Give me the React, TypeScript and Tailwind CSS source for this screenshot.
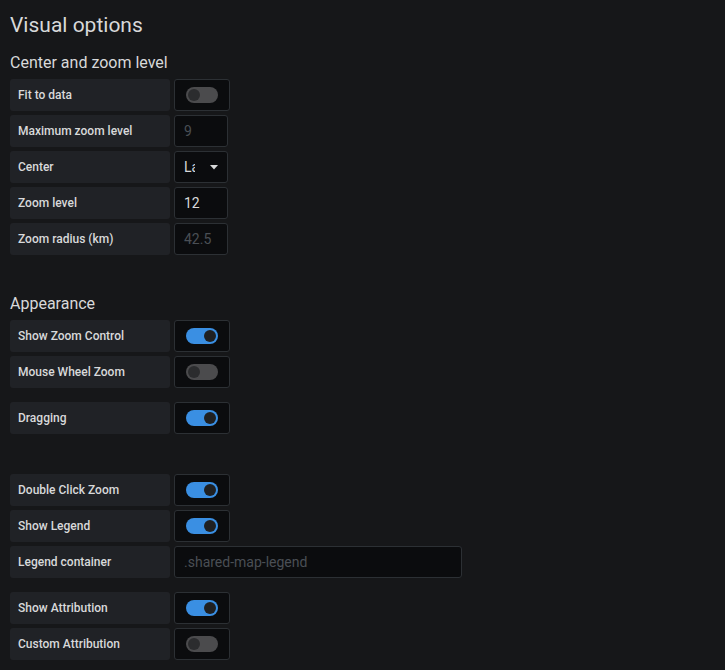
import React from 'react';

const Label: React.FC<{ text: string }> = ({ text }) => (
  <div className="w-[160px] h-8 bg-[#202226] rounded-[3px] flex items-center px-2 text-[12px] font-medium text-[#d8d9da] shrink-0">
    {text}
  </div>
);

const Toggle: React.FC<{ on?: boolean }> = ({ on = false }) => (
  <div className="w-[56px] h-8 bg-[#0b0c0e] border border-[#2c3034] rounded-[3px] flex items-center justify-center">
    <div
      className={
        on
          ? 'w-8 h-4 rounded-full bg-[#3a8fe3] flex items-center justify-end px-[2px]'
          : 'w-8 h-4 rounded-full bg-[#4b4b4d] flex items-center justify-start px-[2px]'
      }
    >
      <div className={on ? 'w-3 h-3 rounded-full bg-[#1f2022]' : 'w-3 h-3 rounded-full bg-[#2b2c2e]'} />
    </div>
  </div>
);

const Row: React.FC<{ label: string; children: React.ReactNode; className?: string }> = ({ label, children, className }) => (
  <div className={`flex gap-1 ${className ?? ''}`}>
    <Label text={label} />
    {children}
  </div>
);

const TextBox: React.FC<{ value: string; placeholder?: boolean; width?: string }> = ({ value, placeholder, width = 'w-[54px]' }) => (
  <div
    className={`${width} h-8 bg-[#0b0c0e] border border-[#2c3034] rounded-[3px] flex items-center px-[9px] text-[14px] ${
      placeholder ? 'text-[#4a4f55]' : 'text-[#d8d9da]'
    }`}
  >
    {value}
  </div>
);

export default function App() {
  return (
    <div className="min-h-[670px] bg-[#161719] px-[10px] pt-[11px] pb-[10px] font-['Roboto','Liberation_Sans',sans-serif]">
      <h1 className="text-[21px] leading-[28px] text-[#d8d9da]">Visual options</h1>

      <h2 className="mt-[14px] text-[16px] leading-[20px] text-[#d8d9da]">Center and zoom level</h2>
      <div className="mt-[6px] flex flex-col gap-1">
        <Row label="Fit to data">
          <Toggle />
        </Row>
        <Row label="Maximum zoom level">
          <TextBox value="9" placeholder />
        </Row>
        <Row label="Center">
          <div className="w-[54px] h-8 bg-[#0b0c0e] border border-[#2c3034] rounded-[3px] flex items-center pl-[9px] pr-[9px] text-[14px] text-[#d8d9da]">
            <span className="w-[11px] overflow-hidden whitespace-nowrap">La</span>
            <svg className="ml-auto" width="8" height="5" viewBox="0 0 8 5">
              <path d="M0 0 L8 0 L4 4.5 Z" fill="#d8d9da" />
            </svg>
          </div>
        </Row>
        <Row label="Zoom level">
          <TextBox value="12" />
        </Row>
        <Row label="Zoom radius (km)">
          <TextBox value="42.5" placeholder />
        </Row>
      </div>

      <h2 className="mt-[39px] text-[16px] leading-[20px] text-[#d8d9da]">Appearance</h2>
      <div className="mt-[6px] flex flex-col gap-1">
        <Row label="Show Zoom Control">
          <Toggle on />
        </Row>
        <Row label="Mouse Wheel Zoom">
          <Toggle />
        </Row>
        <Row label="Dragging" className="mt-[10px]">
          <Toggle on />
        </Row>
        <Row label="Double Click Zoom" className="mt-[36px]">
          <Toggle on />
        </Row>
        <Row label="Show Legend">
          <Toggle on />
        </Row>
        <Row label="Legend container">
          <TextBox value=".shared-map-legend" placeholder width="w-[288px]" />
        </Row>
        <Row label="Show Attribution" className="mt-[10px]">
          <Toggle on />
        </Row>
        <Row label="Custom Attribution">
          <Toggle />
        </Row>
      </div>
    </div>
  );
}
